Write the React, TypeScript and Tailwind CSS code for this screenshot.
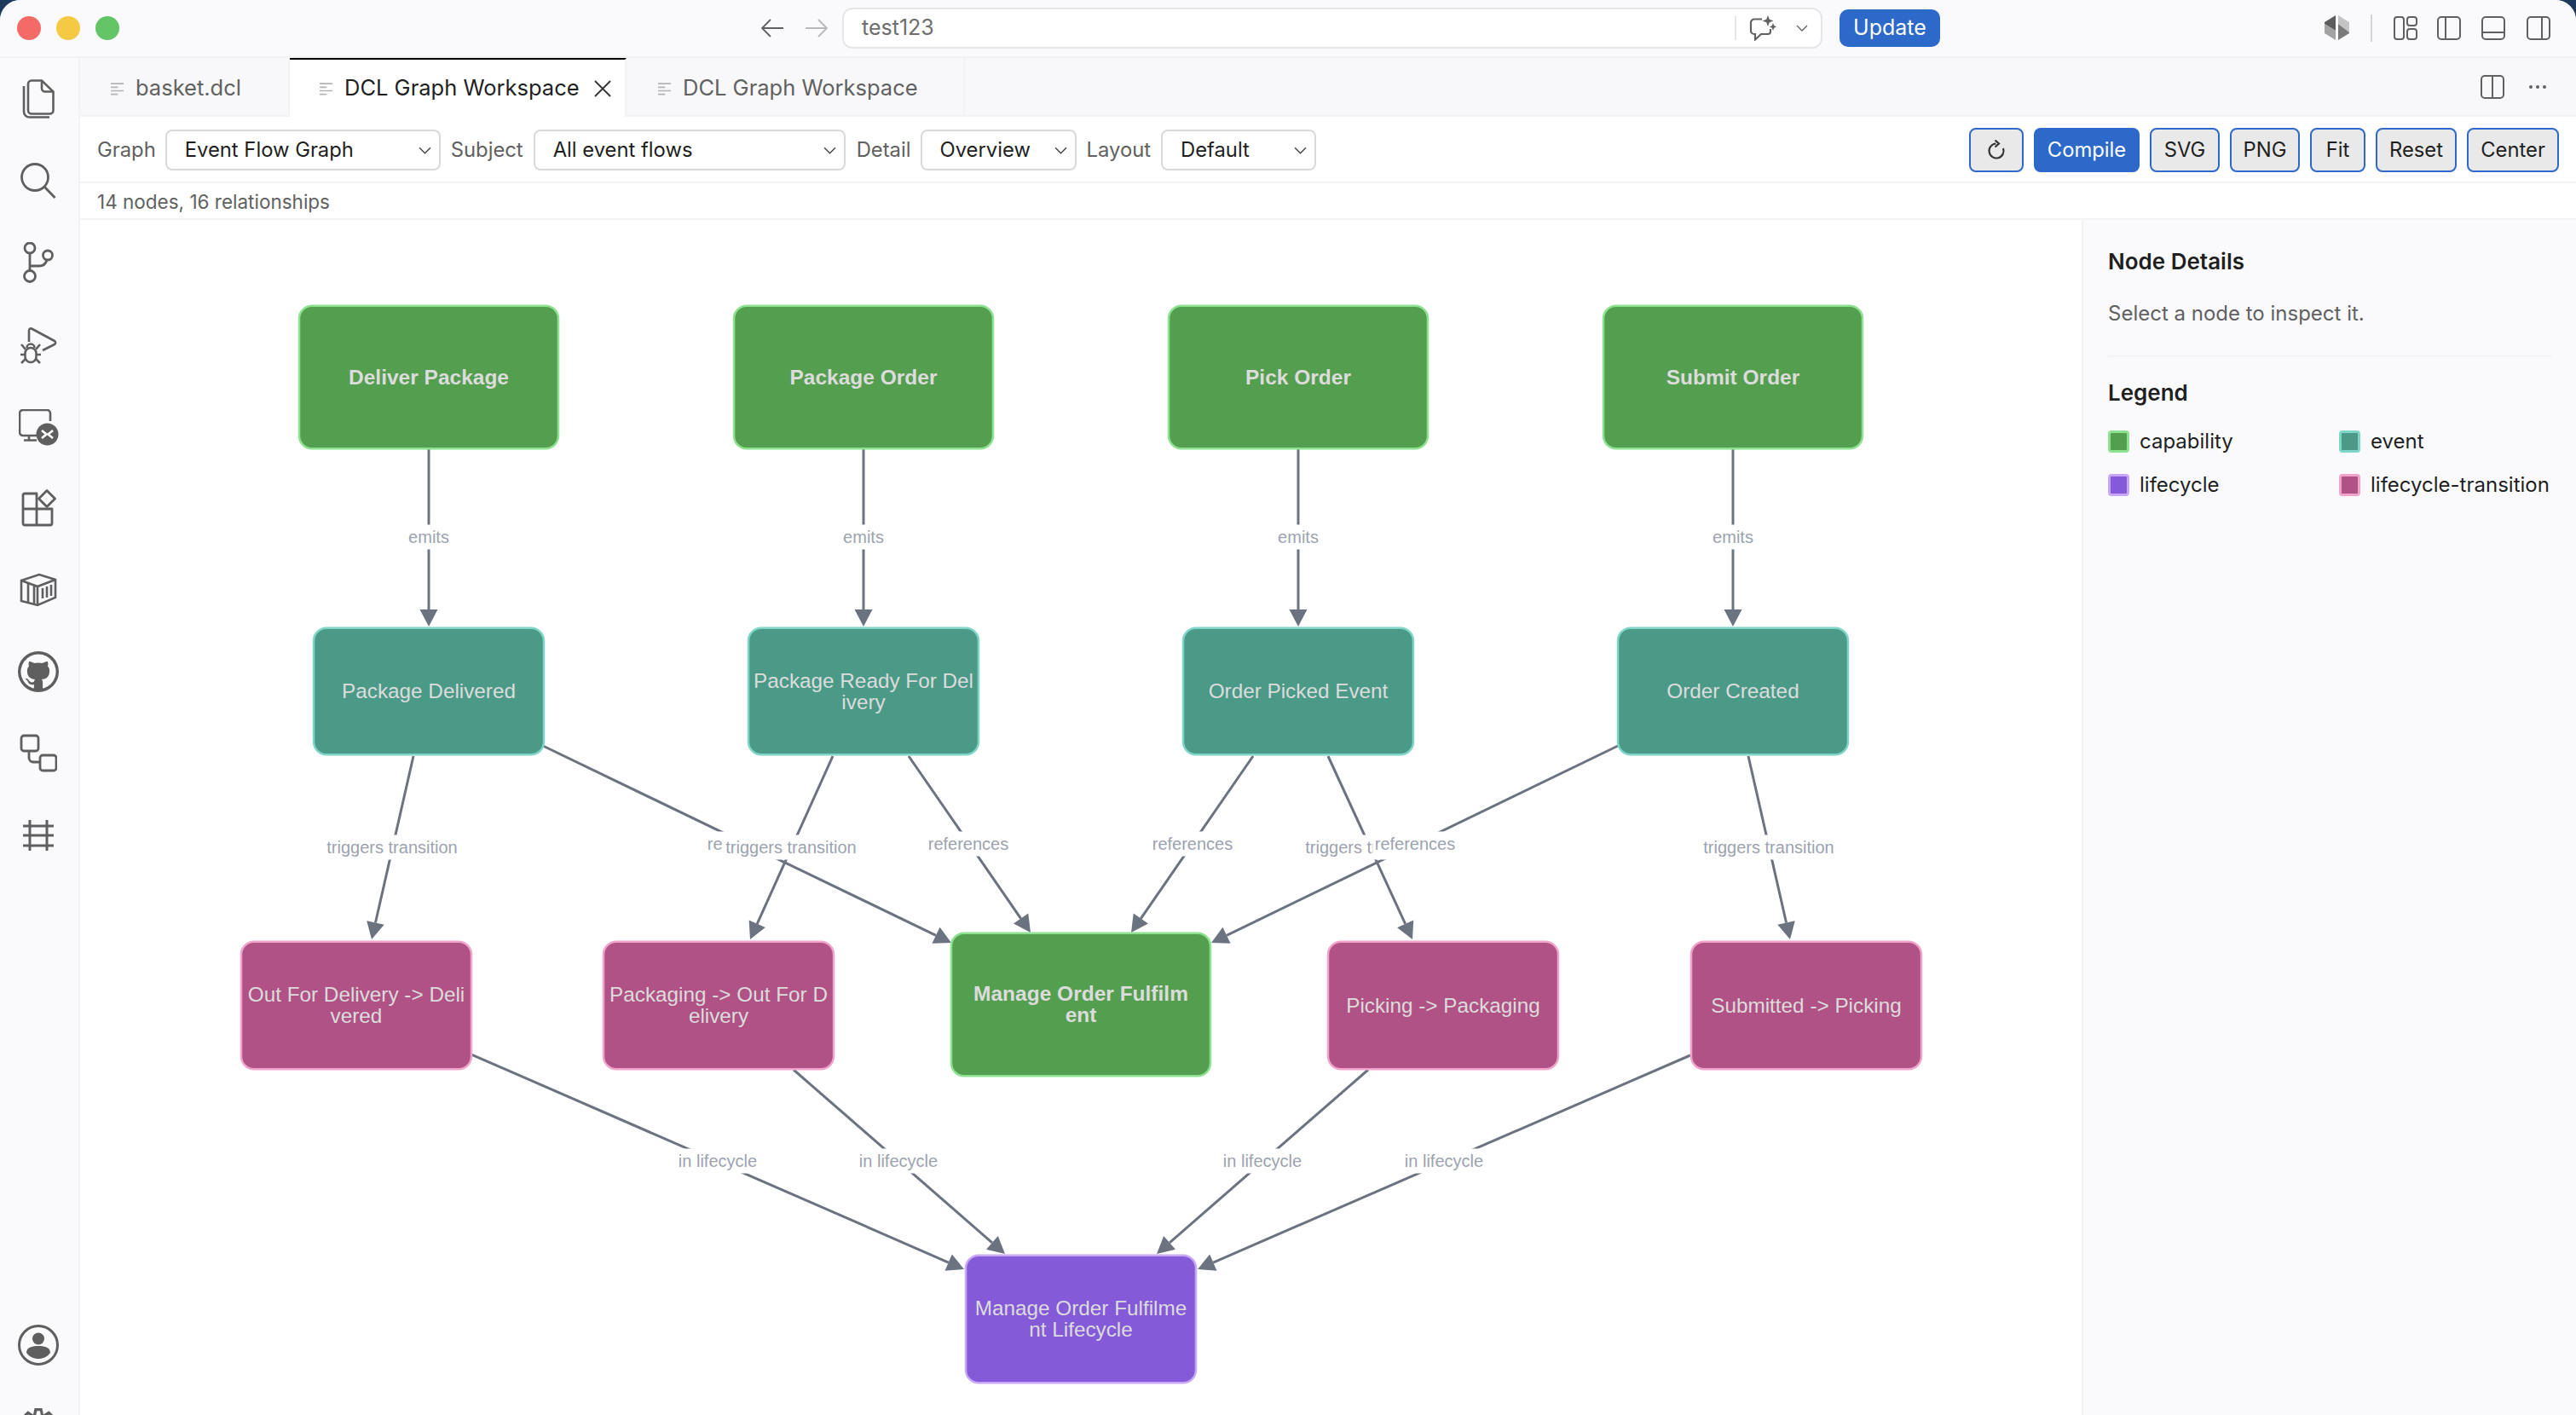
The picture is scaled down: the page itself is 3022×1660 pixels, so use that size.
import React from 'react';
import { VscGithub, VscSettingsGear } from 'react-icons/vsc';

type Kind = 'capability' | 'event' | 'transition' | 'lifecycle';

const KIND_STYLE: Record<Kind, { fill: string; stroke: string }> = {
  capability: { fill: '#549e4f', stroke: '#8ce28f' },
  event: { fill: '#4b9a88', stroke: '#7fd6c8' },
  transition: { fill: '#b05285', stroke: '#f0a3cb' },
  lifecycle: { fill: '#845ad9', stroke: '#c8a8f6' },
};

const NODES: { x: number; y: number; w: number; h: number; kind: Kind; lines: string[] }[] = [
  { x: 351, y: 358, w: 304, h: 169, kind: 'capability', lines: ['Deliver Package'] },
  { x: 861, y: 358, w: 304, h: 169, kind: 'capability', lines: ['Package Order'] },
  { x: 1371, y: 358, w: 304, h: 169, kind: 'capability', lines: ['Pick Order'] },
  { x: 1881, y: 358, w: 304, h: 169, kind: 'capability', lines: ['Submit Order'] },
  { x: 368, y: 736, w: 270, h: 150, kind: 'event', lines: ['Package Delivered'] },
  { x: 878, y: 736, w: 270, h: 150, kind: 'event', lines: ['Package Ready For Del', 'ivery'] },
  { x: 1388, y: 736, w: 270, h: 150, kind: 'event', lines: ['Order Picked Event'] },
  { x: 1898, y: 736, w: 270, h: 150, kind: 'event', lines: ['Order Created'] },
  { x: 283, y: 1104, w: 270, h: 151, kind: 'transition', lines: ['Out For Delivery -> Deli', 'vered'] },
  { x: 708, y: 1104, w: 270, h: 151, kind: 'transition', lines: ['Packaging -> Out For D', 'elivery'] },
  { x: 1116, y: 1094, w: 304, h: 169, kind: 'capability', lines: ['Manage Order Fulfilm', 'ent'] },
  { x: 1558, y: 1104, w: 270, h: 151, kind: 'transition', lines: ['Picking -> Packaging'] },
  { x: 1984, y: 1104, w: 270, h: 151, kind: 'transition', lines: ['Submitted -> Picking'] },
  { x: 1133, y: 1472, w: 270, h: 151, kind: 'lifecycle', lines: ['Manage Order Fulfilme', 'nt Lifecycle'] },
];

const LABEL_W: Record<string, number> = {
  emits: 48,
  references: 93,
  'triggers transition': 155,
  'in lifecycle': 93,
};

// x1 y1 = start on the source node, x2 y2 = arrow tip, lx ly = label centre
const EDGES: { x1: number; y1: number; x2: number; y2: number; label: string; lx: number; ly: number }[] = [
  { x1: 503, y1: 527, x2: 503, y2: 735, label: 'emits', lx: 503, ly: 630 },
  { x1: 1013, y1: 527, x2: 1013, y2: 735, label: 'emits', lx: 1013, ly: 630 },
  { x1: 1523, y1: 527, x2: 1523, y2: 735, label: 'emits', lx: 1523, ly: 630 },
  { x1: 2033, y1: 527, x2: 2033, y2: 735, label: 'emits', lx: 2033, ly: 630 },
  { x1: 637, y1: 875, x2: 1116, y2: 1106, label: 'references', lx: 877, ly: 990 },
  { x1: 485, y1: 887, x2: 436, y2: 1102, label: 'triggers transition', lx: 460, ly: 994 },
  { x1: 977, y1: 887, x2: 880, y2: 1102, label: 'triggers transition', lx: 928, ly: 994 },
  { x1: 1066, y1: 887, x2: 1209, y2: 1094, label: 'references', lx: 1136, ly: 990 },
  { x1: 1470, y1: 887, x2: 1327, y2: 1094, label: 'references', lx: 1399, ly: 990 },
  { x1: 1558, y1: 887, x2: 1657, y2: 1102, label: 'triggers transition', lx: 1608, ly: 994 },
  { x1: 2051, y1: 887, x2: 2100, y2: 1102, label: 'triggers transition', lx: 2075, ly: 994 },
  { x1: 1898, y1: 875, x2: 1421, y2: 1106, label: 'references', lx: 1660, ly: 990 },
  { x1: 553, y1: 1237, x2: 1131, y2: 1489, label: 'in lifecycle', lx: 842, ly: 1362 },
  { x1: 931, y1: 1255, x2: 1179, y2: 1471, label: 'in lifecycle', lx: 1054, ly: 1362 },
  { x1: 1605, y1: 1255, x2: 1357, y2: 1471, label: 'in lifecycle', lx: 1481, ly: 1362 },
  { x1: 1983, y1: 1238, x2: 1405, y2: 1489, label: 'in lifecycle', lx: 1694, ly: 1362 },
];

const Edge = ({ x1, y1, x2, y2 }: { x1: number; y1: number; x2: number; y2: number }) => {
  const len = Math.hypot(x2 - x1, y2 - y1);
  const ux = (x2 - x1) / len;
  const uy = (y2 - y1) / len;
  const bx = x2 - ux * 20;
  const by = y2 - uy * 20;
  const points = `${x2},${y2} ${bx - uy * 10.5},${by + ux * 10.5} ${bx + uy * 10.5},${by - ux * 10.5}`;
  return (
    <g>
      <line x1={x1} y1={y1} x2={bx} y2={by} stroke="#6b7280" strokeWidth={3} />
      <polygon points={points} fill="#6b7280" />
    </g>
  );
};

const Graph = () => (
  <svg viewBox="94 258 2348 1402" className="w-[2348px] h-[1402px] block font-['Liberation_Sans',sans-serif]">
    {EDGES.map((e, i) => (
      <Edge key={i} x1={e.x1} y1={e.y1} x2={e.x2} y2={e.y2} />
    ))}
    {EDGES.map((e, i) => (
      <g key={i}>
        <rect x={e.lx - LABEL_W[e.label] / 2 - 3} y={e.ly - 14.5} width={LABEL_W[e.label] + 6} height={29} fill="#ffffff" />
        <text x={e.lx} y={e.ly + 7} textAnchor="middle" fontSize={20} fill="#9ca3af">
          {e.label}
        </text>
      </g>
    ))}
    {NODES.map((n) => {
      const s = KIND_STYLE[n.kind];
      const cx = n.x + n.w / 2;
      const cy = n.y + n.h / 2;
      const bold = n.kind === 'capability';
      return (
        <g key={n.lines[0]}>
          <rect x={n.x} y={n.y + 0.75} width={n.w} height={n.h - 1.5} rx={15} fill={s.fill} stroke={s.stroke} strokeWidth={2.5} />
          {n.lines.map((line, i) => (
            <text
              key={line}
              x={cx}
              y={cy + 8 + (i - (n.lines.length - 1) / 2) * 25}
              textAnchor="middle"
              fontSize={bold ? 24.5 : 24.3}
              fontWeight={bold ? 700 : 400}
              fill="#dcdcdc"
            >
              {line}
            </text>
          ))}
        </g>
      );
    })}
  </svg>
);

const Chevron = ({ className }: { className?: string }) => (
  <svg viewBox="0 0 14 8" className={className} fill="none" stroke="currentColor" strokeWidth={1.3}>
    <path d="M1 1l6 6 6-6" />
  </svg>
);

const FileLines = ({ className }: { className: string }) => (
  <svg viewBox="0 0 18 18" className={className} fill="none" stroke="#b3b3b3" strokeWidth={2}>
    <path d="M0 2h18M0 7h10M0 12h18M0 17h10" />
  </svg>
);

const Select = ({ value, className }: { value: string; className: string }) => (
  <div className={`h-[48px] flex items-center justify-between pl-[21px] pr-[9px] bg-white border-2 border-[#d9d9d9] rounded-[8px] text-[#1f1f1f] ${className}`}>
    <span>{value}</span>
    <Chevron className="w-[15px] h-[9px] text-[#444444]" />
  </div>
);

const Btn = ({ children, className }: { children: React.ReactNode; className: string }) => (
  <button className={`h-[52px] flex items-center justify-center bg-[#e9e9e9] border-2 border-[#2c69c9] rounded-[8px] text-[#1f1f1f] ${className}`}>
    {children}
  </button>
);

const PanelIcon = ({ bar }: { bar: 'left' | 'right' | 'bottom' | 'center' }) => (
  <svg viewBox="0 0 28 28" className="w-[28px] h-[28px]" fill="none" stroke="#616161" strokeWidth={2}>
    <rect x="1" y="1" width="26" height="26" rx="4" />
    {bar === 'left' && <path d="M10 1v26" />}
    {bar === 'right' && <path d="M18 1v26" />}
    {bar === 'bottom' && <path d="M1 19h26" />}
    {bar === 'center' && <path d="M14 1v26" />}
  </svg>
);

const Slot = ({ children }: { children: React.ReactNode }) => (
  <div className="h-[96px] shrink-0 flex items-center justify-center text-[#5f5f5f]">{children}</div>
);

const Activity = () => (
  <aside className="w-[94px] shrink-0 flex flex-col overflow-hidden pr-[2px] border-r-2 border-[#f3f3f3] bg-[#fafafd]">
    <Slot>
      <svg viewBox="0 0 38 46" className="w-[38px] h-[46px]" fill="none" stroke="currentColor" strokeWidth={2.6}>
        <path d="M11 1.5h12l13.5 13v22a4 4 0 0 1-4 4H11a4 4 0 0 1-4-4v-31a4 4 0 0 1 4-4z" />
        <path d="M23 1.5v9a4 4 0 0 0 4 4h9.5" />
        <path d="M2 8v30a6.500 6.500 0 0 0 6.500 6.500H32" />
      </svg>
    </Slot>
    <Slot>
      <svg viewBox="0 0 42 42" className="w-[42px] h-[42px]" fill="none" stroke="currentColor" strokeWidth={2.8}>
        <circle cx="17" cy="17" r="15.500" />
        <path d="M28 28l12.500 13" />
      </svg>
    </Slot>
    <Slot>
      <svg viewBox="0 0 36 48" className="w-[36px] h-[48px]" fill="none" stroke="currentColor" strokeWidth={2.8}>
        <circle cx="8" cy="7" r="6" />
        <circle cx="8" cy="40" r="6.500" />
        <circle cx="29" cy="15.500" r="5.500" />
        <path d="M8 13v20.500" />
        <path d="M28 21c-1.500 5-5 7-9 7H8" />
      </svg>
    </Slot>
    <Slot>
      <svg viewBox="0 0 43 43" className="w-[43px] h-[43px] mt-[2px]" fill="none" stroke="currentColor" strokeWidth={2.6} strokeLinejoin="round">
        <path d="M10 17V4c0-2 1.500-3 3-2.500l27 14.500c1.500 1 1.500 3 0 4L26 27" />
        <rect x="5.500" y="24" width="13" height="17" rx="6.500" />
        <path d="M7.500 24a4.500 4.500 0 0 1 9 0" />
        <path d="M1 20l5 6M23 20l-5 6M0 32h5M24 32h-5M1 42l5-5M23 42l-5-5" />
      </svg>
    </Slot>
    <Slot>
      <svg viewBox="0 0 47 43" className="w-[47px] h-[43px] mt-[2px]" fill="none" stroke="currentColor" strokeWidth={2.6}>
        <path d="M37 14V5a4 4 0 0 0-4-4H5a4 4 0 0 0-4 4v22a4 4 0 0 0 4 4h17" />
        <path d="M12 31v5M6 36.500h15" />
        <circle cx="33.500" cy="29.500" r="13" fill="currentColor" stroke="none" />
        <path d="M27 25l5.500 4.500L27 34M40 25l-5.500 4.500L40 34" stroke="#ffffff" strokeWidth={2.6} />
      </svg>
    </Slot>
    <Slot>
      <svg viewBox="0 0 42 44" className="w-[42px] h-[44px]" fill="none" stroke="currentColor" strokeWidth={2.8} strokeLinejoin="round">
        <path d="M5 5h14v18h18v17a2 2 0 0 1-2 2H5a2 2 0 0 1-2-2V7a2 2 0 0 1 2-2z" />
        <path d="M3 23h16M19 23v19" />
        <path d="M31 1.500l9.500 9.500L31 20.500 21.500 11z" />
      </svg>
    </Slot>
    <Slot>
      <svg viewBox="0 0 44 40" className="w-[44px] h-[40px]" fill="none" stroke="currentColor" strokeWidth={2.6}>
        <path d="M2 9l21-7 19 6v21l-21 9L2 33z" />
        <path d="M2 9l19 7 21-8M21 16v22M10 12v24M17 15v21" />
        <path d="M27 18v12M32 16v13M37 14v13" />
      </svg>
    </Slot>
    <Slot><VscGithub size={48} /></Slot>
    <Slot>
      <svg viewBox="0 0 44 46" className="w-[44px] h-[46px]" fill="none" stroke="currentColor" strokeWidth={2.8}>
        <rect x="2" y="2" width="20" height="18" rx="3" />
        <rect x="24" y="25" width="19" height="18" rx="3" />
        <path d="M11 20v8a5 5 0 0 0 5 5h8" />
      </svg>
    </Slot>
    <Slot>
      <svg viewBox="0 0 36 36" className="w-[36px] h-[36px]" fill="none" stroke="currentColor" strokeWidth={3}>
        <path d="M0 7h36M0 18h36M0 30h36M8 0v36M28 0v36" />
      </svg>
    </Slot>
    <div className="mt-[502px]">
      <Slot>
        <svg viewBox="0 0 48 48" className="w-[48px] h-[48px]" fill="none">
          <circle cx="24" cy="24" r="22.500" stroke="currentColor" strokeWidth={3} />
          <circle cx="24" cy="16.500" r="7" fill="currentColor" />
          <path d="M10 33c0-6 6-8 14-8s14 2 14 8c-3 4.500-8.500 7-14 7s-11-2.500-14-7z" fill="currentColor" />
        </svg>
      </Slot>
      <Slot><VscSettingsGear size={44} /></Slot>
    </div>
  </aside>
);

const TitleBar = () => (
  <header className="h-[68px] shrink-0 flex items-center border-b-2 border-[#f3f3f3] bg-[#fafafd] pl-[20px] font-[Inter,sans-serif]">
    <div className="flex gap-[18px]">
      <div className="w-[28px] h-[28px] rounded-full bg-[#f46a66]" />
      <div className="w-[28px] h-[28px] rounded-full bg-[#f6c944]" />
      <div className="w-[28px] h-[28px] rounded-full bg-[#63c565]" />
    </div>
    <svg viewBox="0 0 26 22" className="ml-[753px] w-[26px] h-[22px]" fill="none" stroke="#616161" strokeWidth={1.8}>
      <path d="M26 11H2M11 1L1 11l10 10" />
    </svg>
    <svg viewBox="0 0 26 22" className="ml-[26px] w-[26px] h-[22px]" fill="none" stroke="#b9b9b9" strokeWidth={1.8}>
      <path d="M0 11h24M15 1l10 10-10 10" />
    </svg>
    <div className="ml-[17px] w-[1150px] h-[48px] flex items-center bg-white border-2 border-[#e6e6e6] rounded-[12px] pl-[21px] pr-[15px] text-[25px] text-[#6e6e6e]">
      <span>test123</span>
      <div className="ml-auto w-[2px] h-[28px] bg-[#e6e6e6]" />
      <svg viewBox="0 0 32 30" className="ml-[15px] w-[32px] h-[30px]" fill="none" stroke="#616161" strokeWidth={2.2}>
        <path d="M15 4.500H6a4 4 0 0 0-4 4V18a4 4 0 0 0 4 4h1v6.500l7-6.500h8a3 3 0 0 0 3-3v-3" />
        <path d="M22 0l1.800 4.700L28.500 6.500l-4.700 1.800L22 13l-1.800-4.700L15.500 6.500l4.700-1.800z" fill="#616161" stroke="none" />
        <path d="M28 9l1.200 3L32 13.500l-2.800 1.200L28 18l-1.200-3.300L24 13.500l2.800-1.500z" fill="#616161" stroke="none" />
      </svg>
      <Chevron className="ml-[23px] w-[14px] h-[8px] text-[#616161]" />
    </div>
    <button className="ml-[20px] w-[118px] h-[44px] bg-[#2c69c9] rounded-[10px] text-white text-[25px]">Update</button>
    <svg viewBox="0 0 30 30" className="ml-[451px] w-[30px] h-[30px]">
      <path d="M13 0L0 8v2l13 8z" fill="#5c5c5c" />
      <path d="M0 10l13 8v11L0 21z" fill="#a3a3a3" />
      <path d="M16 0l13 8v12L16 10z" fill="#c4c4c4" />
      <path d="M16 10l13 10v1l-13 8z" fill="#7a7a7a" />
    </svg>
    <div className="ml-[24px] w-[2px] h-[32px] bg-[#d4d4d4]" />
    <svg viewBox="0 0 28 28" className="ml-[25px] w-[28px] h-[28px]" fill="none" stroke="#616161" strokeWidth={2}>
      <rect x="1" y="1" width="11" height="26" rx="3" />
      <rect x="16" y="1" width="11" height="10" rx="3" />
      <rect x="16" y="15" width="11" height="12" rx="3" />
    </svg>
    <div className="ml-[23px]"><PanelIcon bar="left" /></div>
    <div className="ml-[24px]"><PanelIcon bar="bottom" /></div>
    <div className="ml-[25px]"><PanelIcon bar="right" /></div>
  </header>
);

const TabBar = () => (
  <div className="h-[69px] shrink-0 flex bg-[#f8f8fb] border-b-2 border-[#f3f3f3] text-[25.500px]">
    <div className="w-[246px] flex items-center pl-[36px] pt-[4px] border-r-2 border-[#f3f3f3] text-[#616161]">
      <FileLines className="w-[15px] h-[16px] mr-[14px]" />
      basket.dcl
    </div>
    <div className="w-[395px] h-[69px] flex items-center pl-[35px] bg-white border-t-2 border-black border-r-2 border-r-[#f3f3f3] text-[#1f1f1f]">
      <FileLines className="w-[15px] h-[16px] mr-[14px]" />
      DCL Graph Workspace
      <svg viewBox="0 0 20 20" className="ml-[17px] w-[20px] h-[20px]" fill="none" stroke="#333333" strokeWidth={1.8}>
        <path d="M1 1l18 18M19 1L1 19" />
      </svg>
    </div>
    <div className="w-[397px] flex items-center pl-[37px] pt-[4px] border-r-2 border-[#f3f3f3] text-[#616161]">
      <FileLines className="w-[15px] h-[16px] mr-[14px]" />
      DCL Graph Workspace
    </div>
    <div className="ml-auto flex items-center pr-[35px]">
      <PanelIcon bar="center" />
      <div className="ml-[29px] flex gap-[4px]">
        <div className="w-[4px] h-[4px] rounded-full bg-[#616161]" />
        <div className="w-[4px] h-[4px] rounded-full bg-[#616161]" />
        <div className="w-[4px] h-[4px] rounded-full bg-[#616161]" />
      </div>
    </div>
  </div>
);

const Toolbar = () => (
  <div className="h-[78px] shrink-0 flex items-center pl-[20px] pr-[20px] pt-[2px] bg-white border-b-2 border-[#f3f3f3] text-[23.800px]">
    <span className="text-[#616161]">Graph</span>
    <Select value="Event Flow Graph" className="ml-[11px] w-[323px]" />
    <span className="ml-[12px] text-[#616161]">Subject</span>
    <Select value="All event flows" className="ml-[12px] w-[366px]" />
    <span className="ml-[13px] text-[#616161]">Detail</span>
    <Select value="Overview" className="ml-[11px] w-[183px]" />
    <span className="ml-[12px] text-[#616161]">Layout</span>
    <Select value="Default" className="ml-[12px] w-[182px]" />
    <div className="ml-auto flex gap-[12px]">
      <Btn className="w-[64px]">
        <svg viewBox="0 0 24 24" className="w-[24px] h-[24px]" fill="none" stroke="#333333" strokeWidth={2.2}>
          <path d="M20 10a8.500 8.500 0 1 1-8.500-5.500" />
          <path d="M10.500 0.500l4.500 4-4.500 4" />
        </svg>
      </Btn>
      <button className="w-[124px] h-[52px] bg-[#2c69c9] rounded-[8px] text-white">Compile</button>
      <Btn className="w-[82px]">SVG</Btn>
      <Btn className="w-[82px]">PNG</Btn>
      <Btn className="w-[65px]">Fit</Btn>
      <Btn className="w-[95px]">Reset</Btn>
      <Btn className="w-[108px]">Center</Btn>
    </div>
  </div>
);

const Swatch = ({ kind, label }: { kind: Kind; label: string }) => {
  const s = KIND_STYLE[kind];
  return (
    <div className="flex items-center gap-[12px]">
      <div className="w-[25px] h-[26px] rounded-[4px] border-[3px]" style={{ backgroundColor: s.fill, borderColor: s.stroke }} />
      <span className="text-[24px] text-[#1f1f1f]">{label}</span>
    </div>
  );
};

const SidePanel = () => (
  <aside className="w-[580px] shrink-0 border-l-2 border-[#f3f3f3] bg-[#fafafd] pl-[29px] pr-[28px] pt-[32px]">
    <h2 className="text-[26px] leading-[34px] font-semibold text-[#1f1f1f]">Node Details</h2>
    <p className="mt-[28px] text-[24px] leading-[32px] text-[#616161]">Select a node to inspect it.</p>
    <div className="mt-[33px] h-[2px] bg-[#f3f3f3]" />
    <h2 className="mt-[25px] text-[26px] leading-[34px] font-semibold text-[#1f1f1f]">Legend</h2>
    <div className="mt-[22px] grid grid-cols-2 gap-x-[21px] gap-y-[15px]">
      <Swatch kind="capability" label="capability" />
      <Swatch kind="event" label="event" />
      <Swatch kind="lifecycle" label="lifecycle" />
      <Swatch kind="transition" label="lifecycle-transition" />
    </div>
  </aside>
);

export default function App() {
  return (
    <div className="w-[3022px] h-[1660px] overflow-hidden bg-[#1d3a5c] font-[Inter,sans-serif]">
      <div className="h-full flex flex-col rounded-t-[24px] overflow-hidden bg-[#fafafd]">
        <TitleBar />
        <div className="flex-1 flex min-h-0">
          <Activity />
          <main className="flex-1 flex flex-col min-w-0">
            <TabBar />
            <Toolbar />
            <div className="h-[43px] shrink-0 flex items-center pl-[20px] pt-[2px] bg-white border-b-2 border-[#f3f3f3] text-[22.500px] text-[#616161]">
              14 nodes, 16 relationships
            </div>
            <div className="flex-1 flex min-h-0 bg-white">
              <div className="flex-1 overflow-hidden">
                <Graph />
              </div>
              <SidePanel />
            </div>
          </main>
        </div>
      </div>
    </div>
  );
}
